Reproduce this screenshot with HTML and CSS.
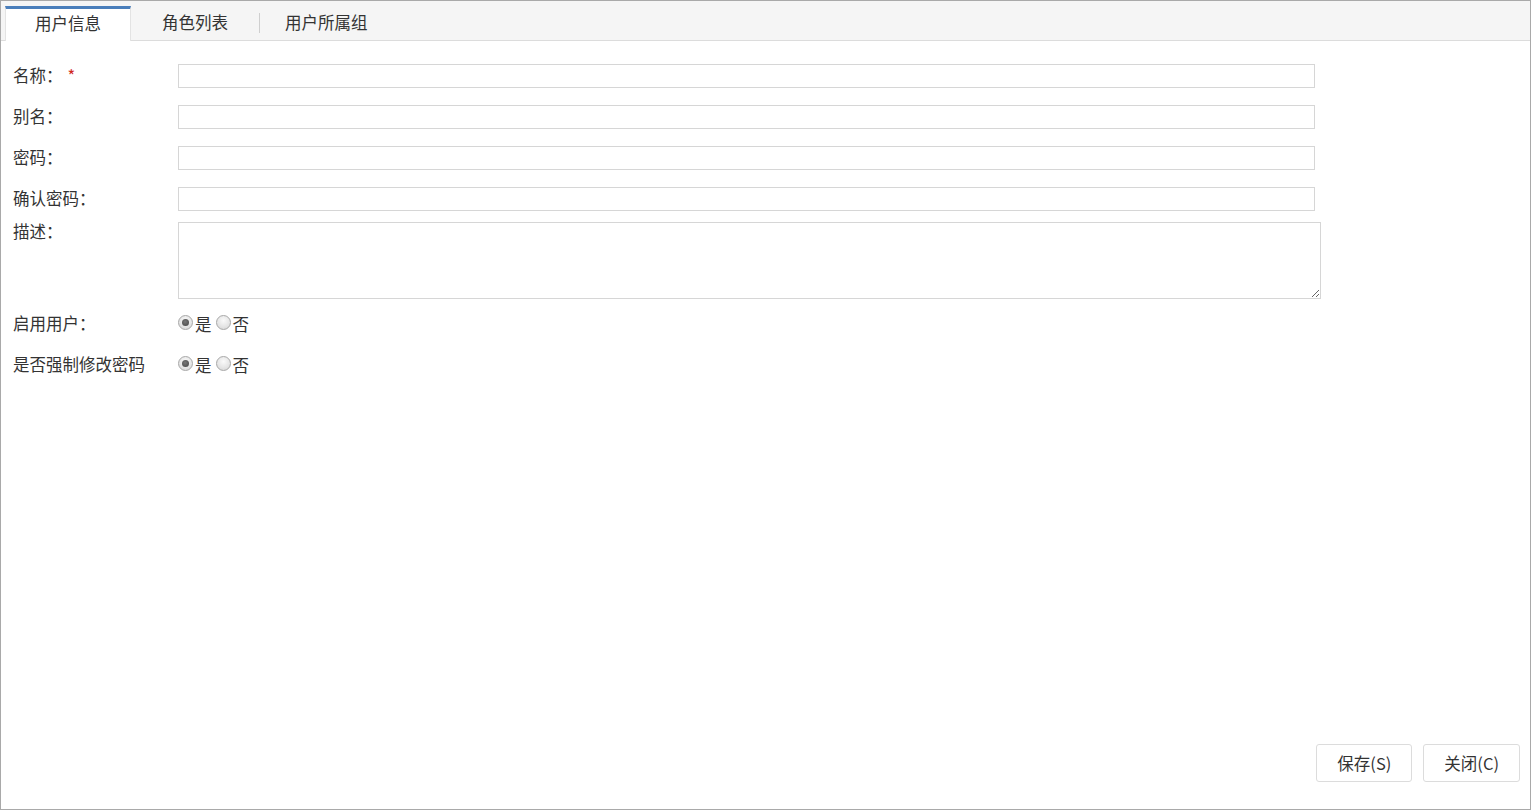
FILE: index.html
```html
<!DOCTYPE html>
<html lang="zh">
<head>
<meta charset="utf-8">
<link rel="stylesheet" href="styles.css">
</head>
<body>
<div class="frame">
  <div class="tabs">
    <div class="tab active">用户信息</div>
    <div class="tab">角色列表</div>
    <div class="sep"></div>
    <div class="tab">用户所属组</div>
  </div>
  <div class="content">
    <form class="form">
      <div class="row">
        <label class="lbl">名称：<span class="req">*</span></label>
        <input class="inp" type="text">
      </div>
      <div class="row">
        <label class="lbl">别名：</label>
        <input class="inp" type="text">
      </div>
      <div class="row">
        <label class="lbl">密码：</label>
        <input class="inp" type="text">
      </div>
      <div class="row">
        <label class="lbl">确认密码：</label>
        <input class="inp" type="text">
      </div>
      <div class="row row-area">
        <label class="lbl">描述：</label>
        <textarea class="area"></textarea>
      </div>
      <div class="row row-radio">
        <label class="lbl">启用用户：</label>
        <div class="radios">
          <label class="opt"><input class="rad" type="radio" name="en" checked>是</label>
          <label class="opt"><input class="rad" type="radio" name="en">否</label>
        </div>
      </div>
      <div class="row row-radio">
        <label class="lbl">是否强制修改密码</label>
        <div class="radios">
          <label class="opt"><input class="rad" type="radio" name="fc" checked>是</label>
          <label class="opt"><input class="rad" type="radio" name="fc">否</label>
        </div>
      </div>
    </form>
    <div class="actions">
      <button class="btn" type="button">保存(S)</button>
      <button class="btn" type="button">关闭(C)</button>
    </div>
  </div>
</div>
</body>
</html>
```

FILE: styles.css
```css
html, body {
  margin: 0;
  padding: 0;
  height: 100%;
  background: #fff;
}
body {
  font-family: "Noto Sans CJK SC", "Liberation Sans", sans-serif;
  color: #333;
  font-size: 16.5px;
}
.frame {
  box-sizing: border-box;
  height: 810px;
  width: 1531px;
  border: 1px solid #a9a9a9;
  display: flex;
  flex-direction: column;
}
.tabs {
  display: flex;
  align-items: flex-end;
  height: 40px;
  background: #f5f5f5;
  border-bottom: 1px solid #dcdcdc;
  padding-left: 4px;
  box-sizing: border-box;
}
.tab {
  box-sizing: border-box;
  height: 34px;
  line-height: 33px;
  padding: 0 31px;
  font-size: 16.5px;
  color: #333;
  white-space: nowrap;
}
.tab.active {
  background: #fff;
  border-top: 3px solid #4a7ebb;
  border-left: 1px solid #e3e3e3;
  border-right: 1px solid #e3e3e3;
  height: 35px;
  margin-bottom: -1px;
  padding: 0 29px;
  line-height: 29px;
}
.sep {
  width: 1px;
  height: 20px;
  background: #cfcfcf;
  margin: 0 0 7px 0;
}
.sep + .tab {
  padding-left: 25px;
}
.content {
  flex: 1;
  display: flex;
  flex-direction: column;
}
.form {
  margin: 0;
  padding: 14px 0 0 12px;
  flex: 1;
}
.row {
  display: grid;
  grid-template-columns: 165px auto;
  align-items: center;
  height: 41px;
}
.lbl {
  font-size: 16.5px;
  color: #333;
  white-space: nowrap;
  position: relative;
  top: -1px;
}
.req {
  color: #d0281e;
  margin-left: 5px;
}
.inp {
  box-sizing: border-box;
  width: 1137px;
  height: 24px;
  border: 1px solid #d6d6d6;
  margin: 0;
  padding: 0 4px;
  font: inherit;
  outline: none;
}
.row-area {
  height: auto;
  align-items: start;
  margin-top: 3px;
}
.row-area .lbl {
  line-height: 20px;
}
.area {
  box-sizing: border-box;
  width: 1143px;
  height: 77px;
  border: 1px solid #d6d6d6;
  margin: 0;
  padding: 2px 4px;
  font: inherit;
  outline: none;
  display: block;
}
.row-area + .row-radio {
  margin-top: 4px;
}
.radios {
  display: flex;
  align-items: center;
}
.opt {
  display: inline-flex;
  align-items: center;
  font-size: 16.5px;
  margin-right: 4px;
}
.rad {
  -webkit-appearance: none;
  appearance: none;
  box-sizing: border-box;
  width: 15px;
  height: 15px;
  margin: 0 2px 2px 0;
  border-radius: 50%;
  border: 1px solid #a8a8a8;
  background: radial-gradient(circle at 50% 35%, #fafafa 0%, #e6e6e6 55%, #d3d3d3 100%);
  position: relative;
}
.rad:checked::after {
  content: "";
  position: absolute;
  left: 3px;
  top: 3px;
  width: 7px;
  height: 7px;
  border-radius: 50%;
  background: radial-gradient(circle at 45% 40%, #777 0%, #444 100%);
}
.actions {
  display: flex;
  justify-content: flex-end;
  gap: 11px;
  padding: 0 10px 27px 0;
}
.btn {
  box-sizing: border-box;
  height: 38px;
  background: #fff;
  border: 1px solid #dcdcdc;
  border-radius: 3px;
  font-family: "Noto Sans CJK SC", "Liberation Sans", sans-serif;
  font-size: 16.5px;
  color: #333;
  padding: 0 20px;
}
```
